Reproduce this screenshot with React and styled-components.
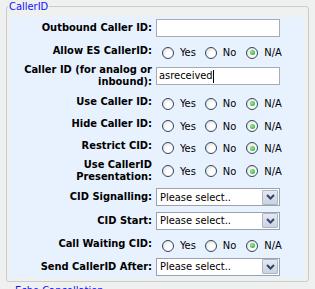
import React from "react"
import styled, { createGlobalStyle } from "styled-components"

const GlobalStyle = createGlobalStyle`
  body {
    margin: 0;
    background: #eff0f0;
    font-family: Tahoma, "DejaVu Sans Condensed", "DejaVu Sans", sans-serif;
    font-size: 11px;
    color: #000;
  }
`

const Page = styled.div`
  width: 315px;
  height: 289px;
  overflow: hidden;
  padding: 0 6px;
  box-sizing: border-box;
`

const Fieldset = styled.fieldset`
  margin: 0 0 2px 0;
  padding: 4px 4px 3px 3px;
  border: 1px solid #c9ccce;
  border-radius: 3px;
  min-width: 0;
`

const Legend = styled.legend`
  margin-left: -2px;
  padding: 0 1px;
  color: #1010ff;
  font-size: 11px;
  line-height: 13px;
`

const Panel = styled.div`
  background: #e8f2fe;
  display: flex;
  flex-direction: column;
`

const Row = styled.div`
  display: grid;
  grid-template-columns: 146px 1fr;
  align-items: center;
  min-height: ${p => p.$h || 23}px;
`

const Label = styled.div`
  text-align: right;
  font-weight: bold;
  line-height: 12px;
  padding-right: 4px;
  white-space: nowrap;
`

const Field = styled.div`
  width: 124px;
  height: 18px;
  box-sizing: border-box;
  border: 1px solid #a5acb5;
  background: #fff;
  display: flex;
  align-items: center;
  padding-left: 2px;
  line-height: 14px;
`

const Caret = styled.span`
  display: inline-block;
  width: 1px;
  height: 13px;
  background: #000;
`

const Select = styled.div`
  width: 124px;
  height: 18px;
  box-sizing: border-box;
  border: 1px solid #9aa3ad;
  background: #fff;
  display: flex;
  align-items: center;
  justify-content: space-between;
  padding: 0 1px 0 3px;
`

const DropButton = styled.span`
  width: 16px;
  height: 15px;
  box-sizing: border-box;
  border: 1px solid #aeb6c6;
  border-radius: 1px;
  background: linear-gradient(#e4e9f2, #cbd3e0);
  display: flex;
  align-items: center;
  justify-content: center;
`

const RadioGroup = styled.div`
  display: flex;
  align-items: center;
  margin-top: ${p => p.$offset ?? 4}px;
  padding-left: 6px;
`

const Option = styled.span`
  display: flex;
  align-items: center;
  margin-right: ${p => p.$space}px;
`

const Circle = styled.span`
  width: 12px;
  height: 12px;
  box-sizing: border-box;
  border-radius: 50%;
  border: 1px solid #2f4560;
  background: radial-gradient(circle at 65% 65%, #ffffff 30%, #d6d6d0 100%);
  margin-right: 6px;
  display: flex;
  align-items: center;
  justify-content: center;

  &::after {
    content: "";
    width: 5px;
    height: 5px;
    border-radius: 50%;
    background: ${p => (p.$on ? "radial-gradient(circle at 40% 40%, #9af09a, #1a961a)" : "transparent")};
  }
`

const NextLegend = styled.div`
  color: #1010ff;
  padding-left: 9px;
  line-height: 13px;
`

function Radios({ offset }) {
  return (
    <RadioGroup $offset={offset}>
      <Option $space={9}>
        <Circle />
        Yes
      </Option>
      <Option $space={10}>
        <Circle />
        No
      </Option>
      <Option $space={0}>
        <Circle $on />
        N/A
      </Option>
    </RadioGroup>
  )
}

function Dropdown() {
  return (
    <Select>
      Please select..
      <DropButton>
        <svg width="9" height="6" viewBox="0 0 9 6">
          <polyline points="1,1 4.5,4.5 8,1" fill="none" stroke="#34446a" strokeWidth="2" />
        </svg>
      </DropButton>
    </Select>
  )
}

export default function App() {
  return (
    <Page>
      <GlobalStyle />
      <Fieldset>
        <Legend>CallerID</Legend>
        <Panel>
          <Row $h={22}>
            <Label>Outbound Caller ID:</Label>
            <Field />
          </Row>
          <Row>
            <Label>Allow ES CallerID:</Label>
            <Radios />
          </Row>
          <Row $h={28}>
            <Label>
              Caller ID (for analog or
              <br />
              inbound):
            </Label>
            <Field>
              asreceived
              <Caret />
            </Field>
          </Row>
          <Row>
            <Label>Use Caller ID:</Label>
            <Radios />
          </Row>
          <Row $h={22}>
            <Label>Hide Caller ID:</Label>
            <Radios />
          </Row>
          <Row $h={22}>
            <Label>Restrict CID:</Label>
            <Radios />
          </Row>
          <Row $h={28}>
            <Label>
              Use CallerID
              <br />
              Presentation:
            </Label>
            <Radios offset={0} />
          </Row>
          <Row $h={24}>
            <Label>CID Signalling:</Label>
            <Dropdown />
          </Row>
          <Row>
            <Label>CID Start:</Label>
            <Dropdown />
          </Row>
          <Row>
            <Label>Call Waiting CID:</Label>
            <Radios />
          </Row>
          <Row>
            <Label>Send CallerID After:</Label>
            <Dropdown />
          </Row>
        </Panel>
      </Fieldset>
      <NextLegend>Echo Cancellation</NextLegend>
    </Page>
  )
}
